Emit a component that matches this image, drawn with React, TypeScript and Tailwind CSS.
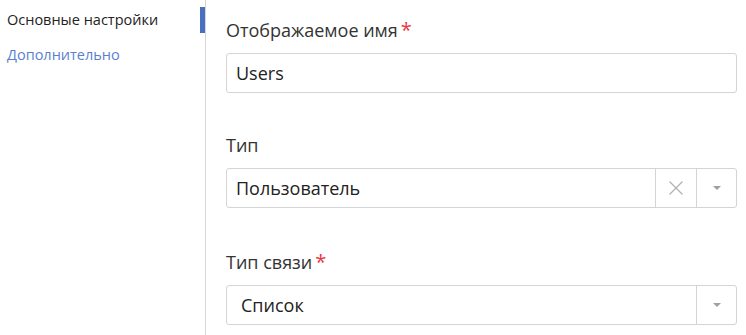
import React from 'react';

function Caret() {
  return (
    <svg width="10" height="6" viewBox="0 0 10 6">
      <path d="M1 1h8L5 5z" fill="#a0a0a0" />
    </svg>
  );
}

function ClearIcon() {
  return (
    <svg width="16" height="16" viewBox="0 0 16 16">
      <path d="M1.5 1.5l13 13M14.5 1.5l-13 13" stroke="#b0b0b0" strokeWidth="1.2" fill="none" />
    </svg>
  );
}

function Label({ text, required }: { text: string; required?: boolean }) {
  return (
    <div className="h-6 flex items-center text-[18px] leading-6 text-[#333]">
      {text}
      {required && <span className="ml-[3px] text-[20px] text-[#e8383d]">*</span>}
    </div>
  );
}

export default function App() {
  return (
    <div className="flex h-[335px] w-[746px] bg-white font-['Open_Sans',sans-serif]">
      {/* Sidebar */}
      <div className="w-[206px] shrink-0 border-r border-[#d6d6d6] pt-[7px]">
        <div className="flex h-[26px] items-center justify-between">
          <span className="pl-[7px] text-[14.5px] text-[#222]">Основные настройки</span>
          <span className="h-[26px] w-[5px] bg-[#4a6fc1]" />
        </div>
        <div className="mt-[9px] flex h-[26px] items-center">
          <span className="pl-[7px] text-[14.5px] text-[#5b7fcf]">Дополнительно</span>
        </div>
      </div>

      {/* Content */}
      <div className="w-[531px] pl-[20px] pt-[18px]">
        <Label text="Отображаемое имя" required />
        <div className="mt-[11px] flex h-[40px] items-center rounded-[3px] border border-[#d4d4d4] px-[9px] text-[18px] text-[#222]">
          Users
        </div>

        <div className="mt-[40px]">
          <Label text="Тип" />
          <div className="mt-[11px] flex h-[40px] items-stretch rounded-[3px] border border-[#d4d4d4] text-[18px] text-[#222]">
            <div className="flex flex-1 items-center px-[9px]">Пользователь</div>
            <div className="flex w-[41px] items-center justify-center border-l border-[#d4d4d4]">
              <ClearIcon />
            </div>
            <div className="flex w-[40px] items-center justify-center border-l border-[#d4d4d4]">
              <Caret />
            </div>
          </div>
        </div>

        <div className="mt-[42px]">
          <Label text="Тип связи" required />
          <div className="mt-[11px] flex h-[40px] items-stretch rounded-[3px] border border-[#d4d4d4] text-[18px] text-[#222]">
            <div className="flex flex-1 items-center px-[14px]">Список</div>
            <div className="flex w-[40px] items-center justify-center border-l border-[#d4d4d4]">
              <Caret />
            </div>
          </div>
        </div>
      </div>
    </div>
  );
}
